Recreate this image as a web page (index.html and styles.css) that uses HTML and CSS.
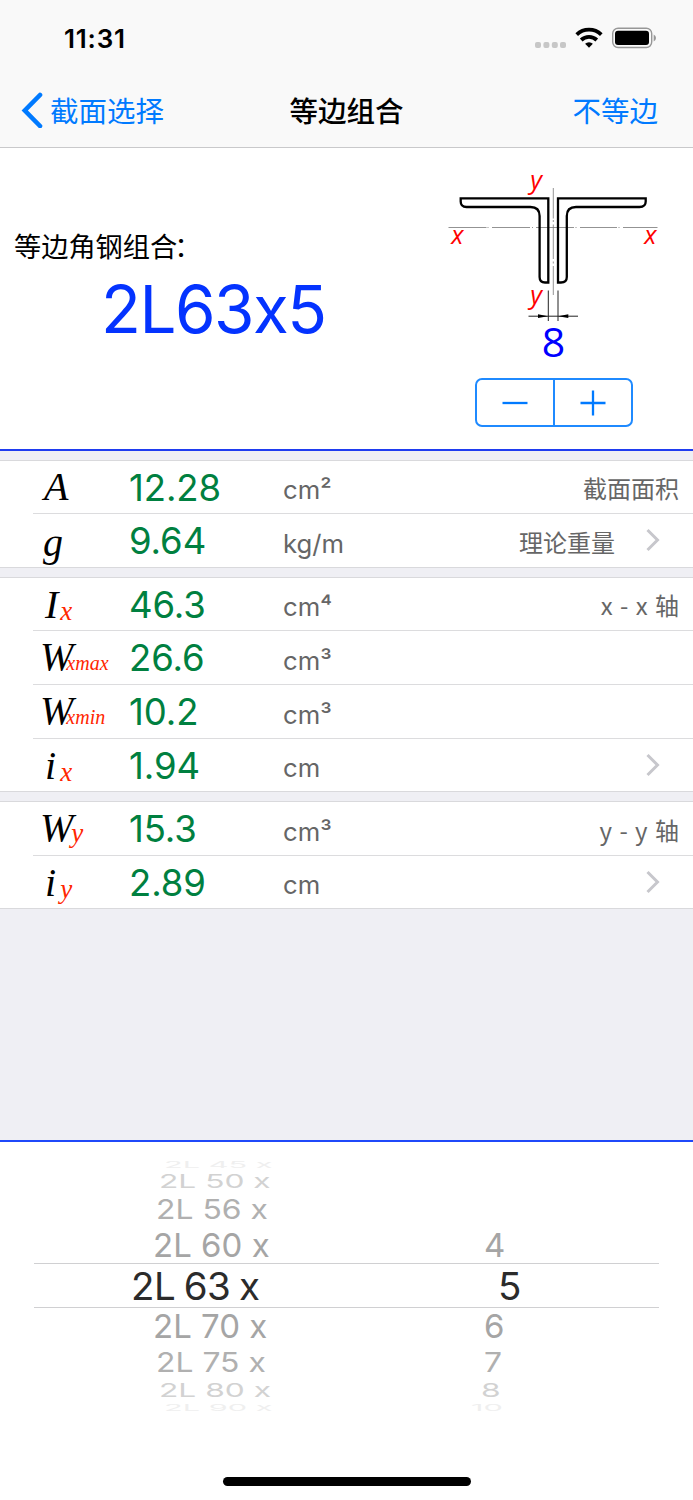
FILE: index.html
```html
<!DOCTYPE html>
<html lang="zh-CN">
<head>
<meta charset="utf-8">
<title>等边组合</title>
<link rel="stylesheet" href="styles.css">
</head>
<body>
<header class="top">
  <div class="status">
    <span class="time">11:31</span>
    <svg class="status-icons" width="124" height="24" viewBox="0 0 124 24">
      <g fill="#c7c7c7"><rect x="1" y="15" width="6" height="6" rx="2"/><rect x="9.4" y="15" width="6" height="6" rx="2"/><rect x="17.8" y="15" width="6" height="6" rx="2"/><rect x="26" y="15" width="6" height="6" rx="2"/></g>
      <g fill="none" stroke="#000" stroke-width="3.8"><path d="M42.700 7.600a17.800 17.800 0 0 1 24.600 0"/><path d="M47.200 13a11.400 11.400 0 0 1 15.600 0"/></g>
      <path d="M51.100 16.800a5.800 5.800 0 0 1 7.800 0L55 20.700z"/>
      <rect x="78.700" y="1.200" width="39" height="19.300" rx="5.400" fill="none" stroke="#979797" stroke-width="1.400"/>
      <rect x="81" y="3.700" width="34" height="14.300" rx="3"/>
      <path d="M119.700 7.400q2.300 1.200 2.300 3.500t-2.300 3.500z" fill="#979797"/>
    </svg>
  </div>
  <nav class="nav">
    <a class="back"><svg width="22" height="36" viewBox="0 0 22 36"><path d="M19 3L3.800 18.500 19 34" fill="none" stroke="#007aff" stroke-width="4.600" stroke-linecap="round" stroke-linejoin="miter"/></svg><span>截面选择</span></a>
    <h1 class="title">等边组合</h1>
    <a class="action">不等边</a>
  </nav>
</header>

<section class="summary">
  <div class="summary-text">
    <p class="caption">等边角钢组合<span class="colon">：</span></p>
    <p class="designation">2L63x5</p>
  </div>
  <div class="figure">
    <svg width="253" height="212" viewBox="440 160 253 212">
      <g fill="none" stroke="#777" stroke-width=".8">
        <path d="M448.500 227.500H486.500M487.500 227.500h1M492 227.500h38M532 227.500h1M536 227.500h38M575.500 227.500h1M580 227.500h37M618.500 227.500h1M623 227.500h34.500"/>
        <path d="M553.300 188V218.500M553.300 220v2M553.300 224.500v34.500M553.300 261.500v2M553.300 266v29"/>
      </g>
      <g fill="none" stroke="#000" stroke-width="2.300">
        <path d="M548.300 198.300H460.700V201.500Q460.700 207 466.500 207H530.500Q539.600 207 539.600 216V277Q539.600 282.500 545 282.500H548.300Z"/>
        <path d="M558 198.300H645.700V201.500Q645.700 207 639.500 207H576Q566.800 207 566.800 216V277Q566.800 282.500 561 282.500H558Z"/>
      </g>
      <path d="M548.300 290.500V321M558 290.500V321M528.500 316.200H578" fill="none" stroke="#222" stroke-width="1"/>
      <path d="M548 316.200l-10-1.900v3.800zM558.300 316.200l10-1.900v3.800z"/>
      <g class="axis-label"><text x="451.300" y="243.500">x</text><text x="644.300" y="243.500">x</text><text x="530.300" y="188.500">y</text><text x="530.300" y="304">y</text></g>
      <text class="gap-label" x="553.500" y="357.200" text-anchor="middle">8</text>
    </svg>
    <div class="stepper">
      <button class="step"><svg width="26" height="26" viewBox="0 0 26 26"><path d="M.5 13h25"/></svg></button>
      <button class="step"><svg width="26" height="26" viewBox="0 0 26 26"><path d="M.5 13h25M13 .5v25"/></svg></button>
    </div>
  </div>
</section>

<main class="results">
  <section class="group">
    <div class="row"><span class="sym sym-a">A</span><span class="value">12.28</span><span class="unit">cm²</span><span class="note">截面面积</span></div>
    <div class="row tall"><span class="sym sym-g">g</span><span class="value">9.64</span><span class="unit">kg/m</span><span class="note">理论重量</span><svg class="chevron" width="14" height="24" viewBox="0 0 14 24"><path d="M1.500 2L11.500 12 1.500 22"/></svg></div>
  </section>
  <section class="group">
    <div class="row"><span class="sym sym-i">I<sub class="sub-x">x</sub></span><span class="value">46.3</span><span class="unit">cm⁴</span><span class="note axis">x - x 轴</span></div>
    <div class="row tall"><span class="sym sym-w">W<sub class="sub-word">xmax</sub></span><span class="value">26.6</span><span class="unit">cm³</span></div>
    <div class="row tall"><span class="sym sym-w">W<sub class="sub-word">xmin</sub></span><span class="value">10.2</span><span class="unit">cm³</span></div>
    <div class="row"><span class="sym sym-r">i<sub class="sub-r">x</sub></span><span class="value">1.94</span><span class="unit">cm</span><svg class="chevron" width="14" height="24" viewBox="0 0 14 24"><path d="M1.500 2L11.500 12 1.500 22"/></svg></div>
  </section>
  <section class="group">
    <div class="row tall"><span class="sym sym-w">W<sub class="sub-y">y</sub></span><span class="value">15.3</span><span class="unit">cm³</span><span class="note axis">y - y 轴</span></div>
    <div class="row"><span class="sym sym-r">i<sub class="sub-r">y</sub></span><span class="value">2.89</span><span class="unit">cm</span><svg class="chevron" width="14" height="24" viewBox="0 0 14 24"><path d="M1.500 2L11.500 12 1.500 22"/></svg></div>
  </section>
</main>

<section class="picker">
  <div class="wheel">
    <div class="item far4"><span class="size">2L 45 x</span></div>
    <div class="item far3"><span class="size">2L 50 x</span></div>
    <div class="item far2"><span class="size">2L 56 x</span></div>
    <div class="item far1"><span class="size">2L 60 x</span><span class="thick">4</span></div>
    <div class="item current"><span class="size">2L 63 x</span><span class="thick">5</span></div>
    <div class="item far1"><span class="size">2L 70 x</span><span class="thick">6</span></div>
    <div class="item far2"><span class="size">2L 75 x</span><span class="thick">7</span></div>
    <div class="item far3"><span class="size">2L 80 x</span><span class="thick">8</span></div>
    <div class="item far4"><span class="size">2L 90 x</span><span class="thick">10</span></div>
  </div>
  <div class="home-bar"></div>
</section>
</body>
</html>
```

FILE: styles.css
```css
* { box-sizing: border-box; }
body {
  margin: 0;
  width: 693px;
  height: 1500px;
  overflow: hidden;
  display: flex;
  flex-direction: column;
  background: #efeff4;
  color: #000;
  font-family: Inter, "Noto Sans CJK SC", sans-serif;
}
h1, p { margin: 0; }

.top { height: 148px; background: #f9f9f9; border-bottom: 1px solid #c9c9cb; }
.status { height: 74px; padding: 22px 35px 0 64px; display: flex; justify-content: space-between; }
.time { font-size: 26px; font-weight: 600; line-height: 33px; letter-spacing: .8px; }
.status-icons { margin-top: 5px; }
.nav {
  height: 73px;
  padding: 0 35px 0 21px;
  display: grid;
  grid-template-columns: 1fr auto 1fr;
  align-items: center;
  font-size: 28.500px;
  line-height: 40px;
  font-family: "Noto Sans CJK SC", sans-serif;
}
.nav > * { padding-bottom: 2px; }
.back { display: flex; align-items: center; gap: 7px; color: #007aff; }
.title { margin: 0 -7px 0 7px; font-size: 28.500px; font-weight: 500; }
.action { color: #007aff; text-align: right; }

.summary { height: 303px; display: flex; background: #fff; border-bottom: 2px solid #1f3cf0; }
.summary-text { width: 440px; padding: 81px 0 0 14px; }
.caption { font: 27.200px/32px "Noto Sans CJK SC", sans-serif; }
.colon { margin-left: -3px; }
.designation { margin: 14px 0 0 87px; font-size: 65.500px; line-height: 70px; letter-spacing: -1.500px; color: #0433ff; }
.figure { width: 253px; padding-top: 12px; }
.figure > svg { display: block; }
.axis-label { font: italic 25.500px "Open Sans", sans-serif; fill: #f00; }
.gap-label { font: 41px "Open Sans", sans-serif; fill: #00f; }
.stepper { width: 158px; height: 49px; margin: 6px 0 0 35px; display: flex; border: 2px solid #1f8aff; border-radius: 7px; }
.step { flex: 1; padding: 0; border: 0; background: none; display: flex; align-items: center; justify-content: center; }
.step + .step { border-left: 2px solid #1f8aff; }
.step svg { stroke: #007aff; stroke-width: 2.300; }

.results { height: 689px; padding-top: 9px; }
.group { background: #fff; border: solid #d9d9dc; border-width: 1px 0; margin-bottom: 9px; }
.row { height: 52px; display: flex; line-height: 52px; }
.row.tall { height: 53px; line-height: 53px; }
.row + .row {
  box-sizing: content-box;
  border-top: 1px solid #dcdcde;
  border-image: linear-gradient(90deg, transparent 34px, #dcdcde 34px) 1;
}
.sym { width: 129px; font-family: "Liberation Serif", serif; font-style: italic; font-size: 40px; white-space: nowrap; }
.sym-a { padding-left: 44px; }
.sym-g { padding: 2px 0 0 43px; }
.sym-i { padding: 1px 0 0 45px; }
.sym-w { padding-left: 40px; letter-spacing: -1px; line-height: 51px; }
.sym-r { padding: 1px 0 0 45px; }
.sym sub { color: #ff2600; font-size: 27px; line-height: 0; letter-spacing: 0; vertical-align: -1.500px; }
.sym .sub-x { margin-left: 2px; }
.sym .sub-r { margin-left: 4px; vertical-align: -2px; }
.sym .sub-y { margin-left: -1px; vertical-align: -1px; }
.sym .sub-word { margin-left: -6px; font-size: 20px; vertical-align: 0; }
.value { width: 154px; padding-top: 1px; font-size: 36.500px; letter-spacing: -.1px; color: #008040; }
.unit { padding-top: 3px; font-size: 25.700px; color: #666; }
.note { margin-left: auto; padding: 1px 14px 0 0; font-size: 24px; font-family: "Noto Sans CJK SC", sans-serif; color: #666; }
.axis { word-spacing: 2px; }
.note:has(+ .chevron) { padding-right: 31px; }
.chevron { align-self: center; margin: 0 33px 1px auto; fill: none; stroke: #c7c7cc; stroke-width: 3; }
.note + .chevron { margin-left: 0; }

.picker { height: 360px; padding-top: 17px; background: #fff; border-top: 2px solid #1f48fa; }
.wheel { height: 254px; }
.item { display: flex; margin: 0 34px; align-items: center; white-space: nowrap; line-height: 1; font-size: 33px; color: #a5a5a5; }
.size { width: 126px; margin-left: 119px; transform-origin: 0 50%; }
.thick { margin-left: 205px; transform-origin: 0 50%; }
.far1 { height: 38px; }
.far2 { height: 34px; color: #b0b0b0; }
.far2 span { transform: scale(.965, .83); }
.far2 .size { margin-left: 122px; }
.far2 .thick { margin-left: 202px; }
.far3 { height: 22px; color: #d2d2d2; }
.far3 span { transform: scale(.96, .58); }
.far3 .size { margin-left: 125px; }
.far3 .thick { margin-left: 196px; }
.far4 { height: 12px; color: #efefef; }
.far4:first-child { height: 11px; }
.far4 span { transform: scale(.93, .28); }
.far4 .size { margin-left: 130px; }
.far4 .thick { margin-left: 181px; }
.current { height: 45px; margin-top: -1px; margin-bottom: -1px; padding-top: 1px; border: solid #d0d0d2; border-width: 1px 0; font-size: 38.500px; color: #2b2b2b; }
.current .size { margin-left: 97px; letter-spacing: -.6px; word-spacing: -1.500px; }
.current .thick { margin-left: 241px; }
.home-bar { width: 248px; height: 9px; margin: 64px auto 0; border-radius: 5px; background: #000; }
```
